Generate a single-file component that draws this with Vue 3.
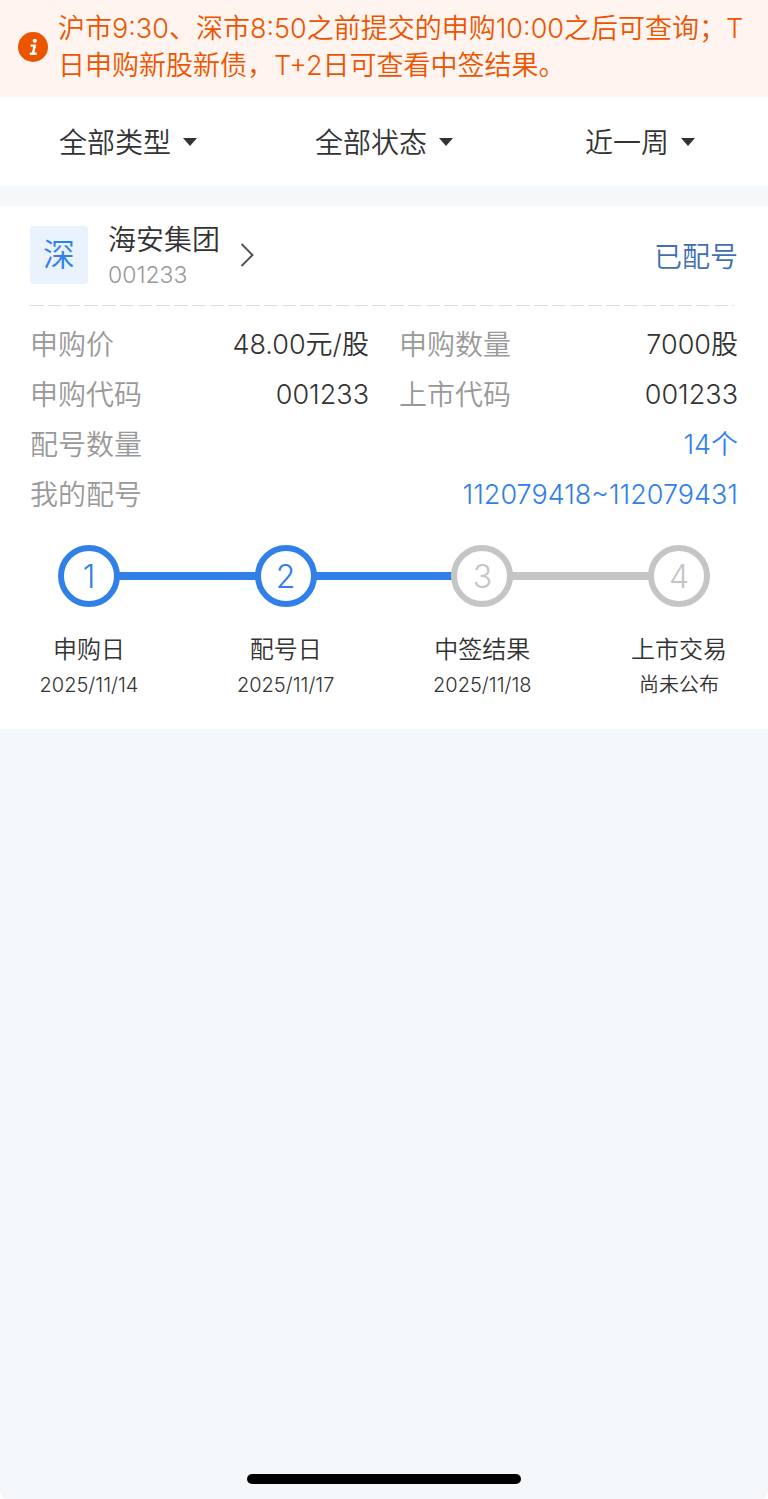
<script setup>
import { ref } from 'vue'

// 筛选条件
const filters = ref([
  { name: 'type', label: '类型', value: '全部类型', options: ['全部类型', '新股', '新债'] },
  { name: 'status', label: '状态', value: '全部状态', options: ['全部状态', '已配号', '已中签'] },
  { name: 'range', label: '时间', value: '近一周', options: ['近一周', '近一月', '近一年'] }
])

// 申购信息
const info = [
  { label: '申购价', value: '48.00元/股' },
  { label: '申购数量', value: '7000股' },
  { label: '申购代码', value: '001233' },
  { label: '上市代码', value: '001233' },
  { label: '配号数量', value: '14个', wide: true },
  { label: '我的配号', value: '112079418~112079431', wide: true }
]

// 进度
const steps = [
  { title: '申购日', date: '2025/11/14', done: true },
  { title: '配号日', date: '2025/11/17', done: true },
  { title: '中签结果', date: '2025/11/18', done: false },
  { title: '上市交易', date: '尚未公布', done: false }
]
</script>

<template>
  <div class="page">
    <!-- 提示 -->
    <div class="notice">
      <svg class="notice-icon" viewBox="0 0 30 30" aria-hidden="true">
        <circle cx="15" cy="15" r="15" fill="#ec5500" />
        <circle cx="16.8" cy="8.8" r="2.1" fill="#fff" />
        <path d="M12.6 13.6h4.2l-1.9 8M11.8 21.8h6.8" fill="none" stroke="#fff" stroke-width="2.4" />
      </svg>
      <p class="notice-text">沪市9:30、深市8:50之前提交的申购10:00之后可查询；T日申购新股新债，T+2日可查看中签结果。</p>
    </div>

    <!-- 筛选 -->
    <div class="filters">
      <label v-for="f in filters" :key="f.name" class="filter">
        <select v-model="f.value" :name="f.name" :aria-label="f.label">
          <option v-for="o in f.options" :key="o">{{ o }}</option>
        </select>
        <svg class="arrow" viewBox="0 0 14 8" aria-hidden="true">
          <path d="M0 0h14L7 8z" fill="#333" />
        </svg>
      </label>
    </div>

    <section class="card">
      <div class="card-head">
        <span class="market">深</span>
        <a href="#" class="stock">
          <span class="stock-text">
            <span class="stock-name">海安集团</span>
            <span class="stock-code">001233</span>
          </span>
          <svg class="chevron" viewBox="0 0 14 24" aria-hidden="true">
            <path d="M1.5 1l11 11-11 11" fill="none" stroke="#555" stroke-width="2" />
          </svg>
        </a>
        <span class="status">已配号</span>
      </div>

      <div class="divider"></div>

      <dl class="info">
        <div v-for="item in info" :key="item.label" class="info-item" :class="{ wide: item.wide }">
          <dt>{{ item.label }}</dt>
          <dd>{{ item.value }}</dd>
        </div>
      </dl>

      <!-- 进度条 -->
      <div class="track">
        <template v-for="(s, i) in steps" :key="s.title">
          <span v-if="i > 0" class="line" :class="{ done: steps[i - 1].done }"></span>
          <span class="circle" :class="{ done: s.done }">{{ i + 1 }}</span>
        </template>
      </div>
      <ol class="steps">
        <li v-for="s in steps" :key="s.title">
          <span class="step-title">{{ s.title }}</span>
          <span class="step-date">{{ s.date }}</span>
        </li>
      </ol>
    </section>

    <div class="home-bar"></div>
  </div>
</template>

<style>
body {
  margin: 0;
  background: #fff;
}
</style>

<style scoped>
.page {
  display: flex;
  flex-direction: column;
  box-sizing: border-box;
  min-height: 100vh;
  background: #f4f8fa;
  border-radius: 0 0 8px 8px;
  font-family: Inter, "Noto Sans CJK SC", sans-serif;
  font-weight: 350;
  font-size: 28px;
  color: #333;
}

/* 提示 */
.notice {
  display: flex;
  align-items: center;
  gap: 10px;
  padding: 10px 18px 13px;
  background: #fff4ef;
}
.notice-icon {
  flex: none;
  width: 30px;
  height: 30px;
}
.notice-text {
  flex: 1;
  margin: 0;
  font-size: 27px;
  line-height: 37px;
  color: #ec5500;
}

/* 筛选 */
.filters {
  display: flex;
  background: #fff;
  margin-bottom: 20px;
}
.filter {
  flex: 1;
  display: flex;
  align-items: center;
  justify-content: center;
  gap: 12px;
  height: 89px;
}
.filter select {
  appearance: none;
  field-sizing: content;
  padding: 2px 0 0;
  border: none;
  background: none;
  font: inherit;
  line-height: 40px;
  color: inherit;
}
.arrow {
  width: 14px;
  height: 8px;
}

/* 卡片 */
.card {
  padding: 14px 30px 28px;
  background: #fff;
}
.card-head {
  display: flex;
  align-items: center;
  gap: 20px;
}
.market {
  width: 58px;
  line-height: 58px;
  border-radius: 4px;
  background: #e9f2fd;
  color: #3080e8;
  font-size: 32px;
  text-align: center;
}
.stock {
  display: flex;
  align-items: center;
  gap: 20px;
  color: inherit;
  text-decoration: none;
}
.stock-text {
  display: flex;
  flex-direction: column;
}
.stock-name {
  line-height: 40px;
}
.stock-code {
  font-size: 23px;
  line-height: 30px;
  color: #999;
}
.chevron {
  width: 14px;
  height: 24px;
}
.status {
  margin-left: auto;
  color: #416fb0;
}
.divider {
  height: 1px;
  margin: 15px 4px 14px 0;
  background: repeating-linear-gradient(to right, #ddd 0 14px, transparent 14px 18px);
}

.info {
  display: grid;
  grid-template-columns: 1fr 1fr;
  column-gap: 30px;
  margin: 0;
}
.info-item {
  display: flex;
  justify-content: space-between;
  line-height: 50px;
}
.info-item.wide {
  grid-column: span 2;
}
.info-item dt {
  color: #999;
}
.info-item dd {
  margin: 0;
  font-size: 27px;
}
.wide dd {
  color: #3080e8;
}

/* 进度条 */
.track {
  display: flex;
  align-items: center;
  padding: 0 28px;
  margin-top: 25px;
}
.circle {
  box-sizing: border-box;
  width: 62px;
  height: 62px;
  border: 6px solid #c5c5c5;
  border-radius: 50%;
  font-size: 32px;
  font-weight: 300;
  line-height: 52px;
  text-align: center;
  color: #c5c5c5;
}
.line {
  flex: 1;
  height: 8px;
  margin: 0 -1px;
  background: #c5c5c5;
}
.circle.done {
  border-color: #3080e8;
  color: #3080e8;
}
.line.done {
  background: #3080e8;
}
.steps {
  display: flex;
  justify-content: space-between;
  margin: 24px 0 0;
  padding: 0;
  list-style: none;
}
.steps li {
  display: flex;
  flex-direction: column;
  width: 118px;
  text-align: center;
}
.step-title {
  font-size: 24px;
  line-height: 38px;
}
.step-date {
  font-size: 20px;
  line-height: 32px;
}

.home-bar {
  width: 274px;
  height: 10px;
  margin: auto auto 15px;
  border-radius: 5px;
  background: #000;
}
</style>
